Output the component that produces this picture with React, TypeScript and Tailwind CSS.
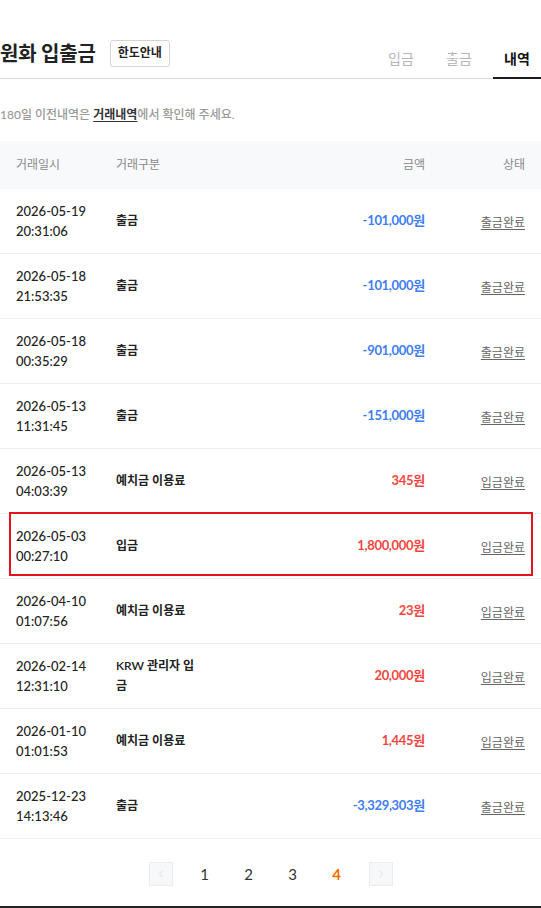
import { ChevronLeft, ChevronRight } from 'lucide-react';

type Row = {
  date: string;
  time: string;
  kind: string;
  amount: string;
  status: string;
  highlight?: boolean;
};

const rows: Row[] = [
  { date: '2026-05-19', time: '20:31:06', kind: '출금', amount: '-101,000원', status: '출금완료' },
  { date: '2026-05-18', time: '21:53:35', kind: '출금', amount: '-101,000원', status: '출금완료' },
  { date: '2026-05-18', time: '00:35:29', kind: '출금', amount: '-901,000원', status: '출금완료' },
  { date: '2026-05-13', time: '11:31:45', kind: '출금', amount: '-151,000원', status: '출금완료' },
  { date: '2026-05-13', time: '04:03:39', kind: '예치금 이용료', amount: '345원', status: '입금완료' },
  { date: '2026-05-03', time: '00:27:10', kind: '입금', amount: '1,800,000원', status: '입금완료', highlight: true },
  { date: '2026-04-10', time: '01:07:56', kind: '예치금 이용료', amount: '23원', status: '입금완료' },
  { date: '2026-02-14', time: '12:31:10', kind: 'KRW 관리자 입금', amount: '20,000원', status: '입금완료' },
  { date: '2026-01-10', time: '01:01:53', kind: '예치금 이용료', amount: '1,445원', status: '입금완료' },
  { date: '2025-12-23', time: '14:13:46', kind: '출금', amount: '-3,329,303원', status: '출금완료' },
];

export default function App() {
  return (
    <div className="w-[541px] min-h-[908px] bg-white text-[#222] font-['Lato','Noto_Sans_CJK_KR',sans-serif]">
      {/* 상단 타이틀 + 탭 */}
      <div className="flex items-end justify-between h-[79px] border-b border-[#dcdcdc]">
        <div className="flex items-center gap-[14px] pb-[11px]">
          <h2 className="text-[20px] font-bold leading-[28px] tracking-[-0.2px]">원화 입출금</h2>
          <button className="h-[27px] px-[7px] border border-[#d5d5d5] rounded-[3px] text-[12px] font-bold text-[#222] bg-white">
            한도안내
          </button>
        </div>
        <div className="flex gap-[10px]">
          <div className="w-[48px] text-center text-[14px] leading-[20px] text-[#b5b5b5] pb-[9px]">입금</div>
          <div className="w-[48px] text-center text-[14px] leading-[20px] text-[#b5b5b5] pb-[9px]">출금</div>
          <div className="w-[48px] text-center text-[14px] leading-[20px] font-bold text-[#111] pb-[8px] border-b-2 border-[#1a1a24] -mb-px">
            내역
          </div>
        </div>
      </div>

      <p className="mt-[27px] text-[12px] leading-[18px] text-[#999] font-medium">
        180일 이전내역은{' '}
        <span className="font-bold text-[#333] underline underline-offset-2">거래내역</span>
        에서 확인해 주세요.
      </p>

      {/* 테이블 */}
      <div className="mt-[17px]">
        <div className="flex items-center h-[48px] bg-[#f8f9fb] text-[12px] text-[#8a8a8a]">
          <div className="w-[116px] pl-[16px]">거래일시</div>
          <div className="w-[84px]">거래구분</div>
          <div className="flex-1 text-right">금액</div>
          <div className="w-[116px] text-right pr-[16px]">상태</div>
        </div>

        {rows.map((r, i) => (
          <div key={i} className="relative flex items-center h-[65px] border-b border-[#efefef]">
            {r.highlight && (
              <div className="absolute left-[9px] right-[8px] top-[-2px] bottom-[2px] border-2 border-[#e5141c] pointer-events-none" />
            )}
            <div className="w-[116px] pl-[16px] text-[13px] leading-[20px] font-medium text-[#222]">
              <div>{r.date}</div>
              <div>{r.time}</div>
            </div>
            <div className="w-[84px] text-[12px] leading-[20px] font-semibold text-[#222] break-all">{r.kind}</div>
            <div
              className={
                'flex-1 text-right text-[13px] font-bold tracking-[-0.3px] ' +
                (r.amount.startsWith('-') ? 'text-[#3f7ef3]' : 'text-[#f0483e]')
              }
            >
              {r.amount}
            </div>
            <div className="w-[116px] pr-[16px] text-right">
              <span className="text-[12px] text-[#666] underline underline-offset-2">{r.status}</span>
            </div>
          </div>
        ))}
      </div>

      {/* 페이지네이션 */}
      <div className="flex justify-center pt-[23px] pb-[20px]">
        <div className="w-[44px] flex justify-center">
          <div className="w-[24px] h-[24px] flex items-center justify-center border border-[#ececec] bg-[#f7f8fa]">
            <ChevronLeft size={12} strokeWidth={1.5} className="text-[#d4d4d4]" />
          </div>
        </div>
        {[1, 2, 3, 4].map((n) => (
          <div
            key={n}
            className={
              'w-[44px] h-[24px] flex items-center justify-center text-[15px] ' +
              (n === 4 ? 'font-bold text-[#ff6c00]' : 'text-[#333]')
            }
          >
            {n}
          </div>
        ))}
        <div className="w-[44px] flex justify-center">
          <div className="w-[24px] h-[24px] flex items-center justify-center border border-[#ececec] bg-[#f7f8fa]">
            <ChevronRight size={12} strokeWidth={1.5} className="text-[#d4d4d4]" />
          </div>
        </div>
      </div>
      <div className="h-[2px] bg-[#222]" />
    </div>
  );
}
